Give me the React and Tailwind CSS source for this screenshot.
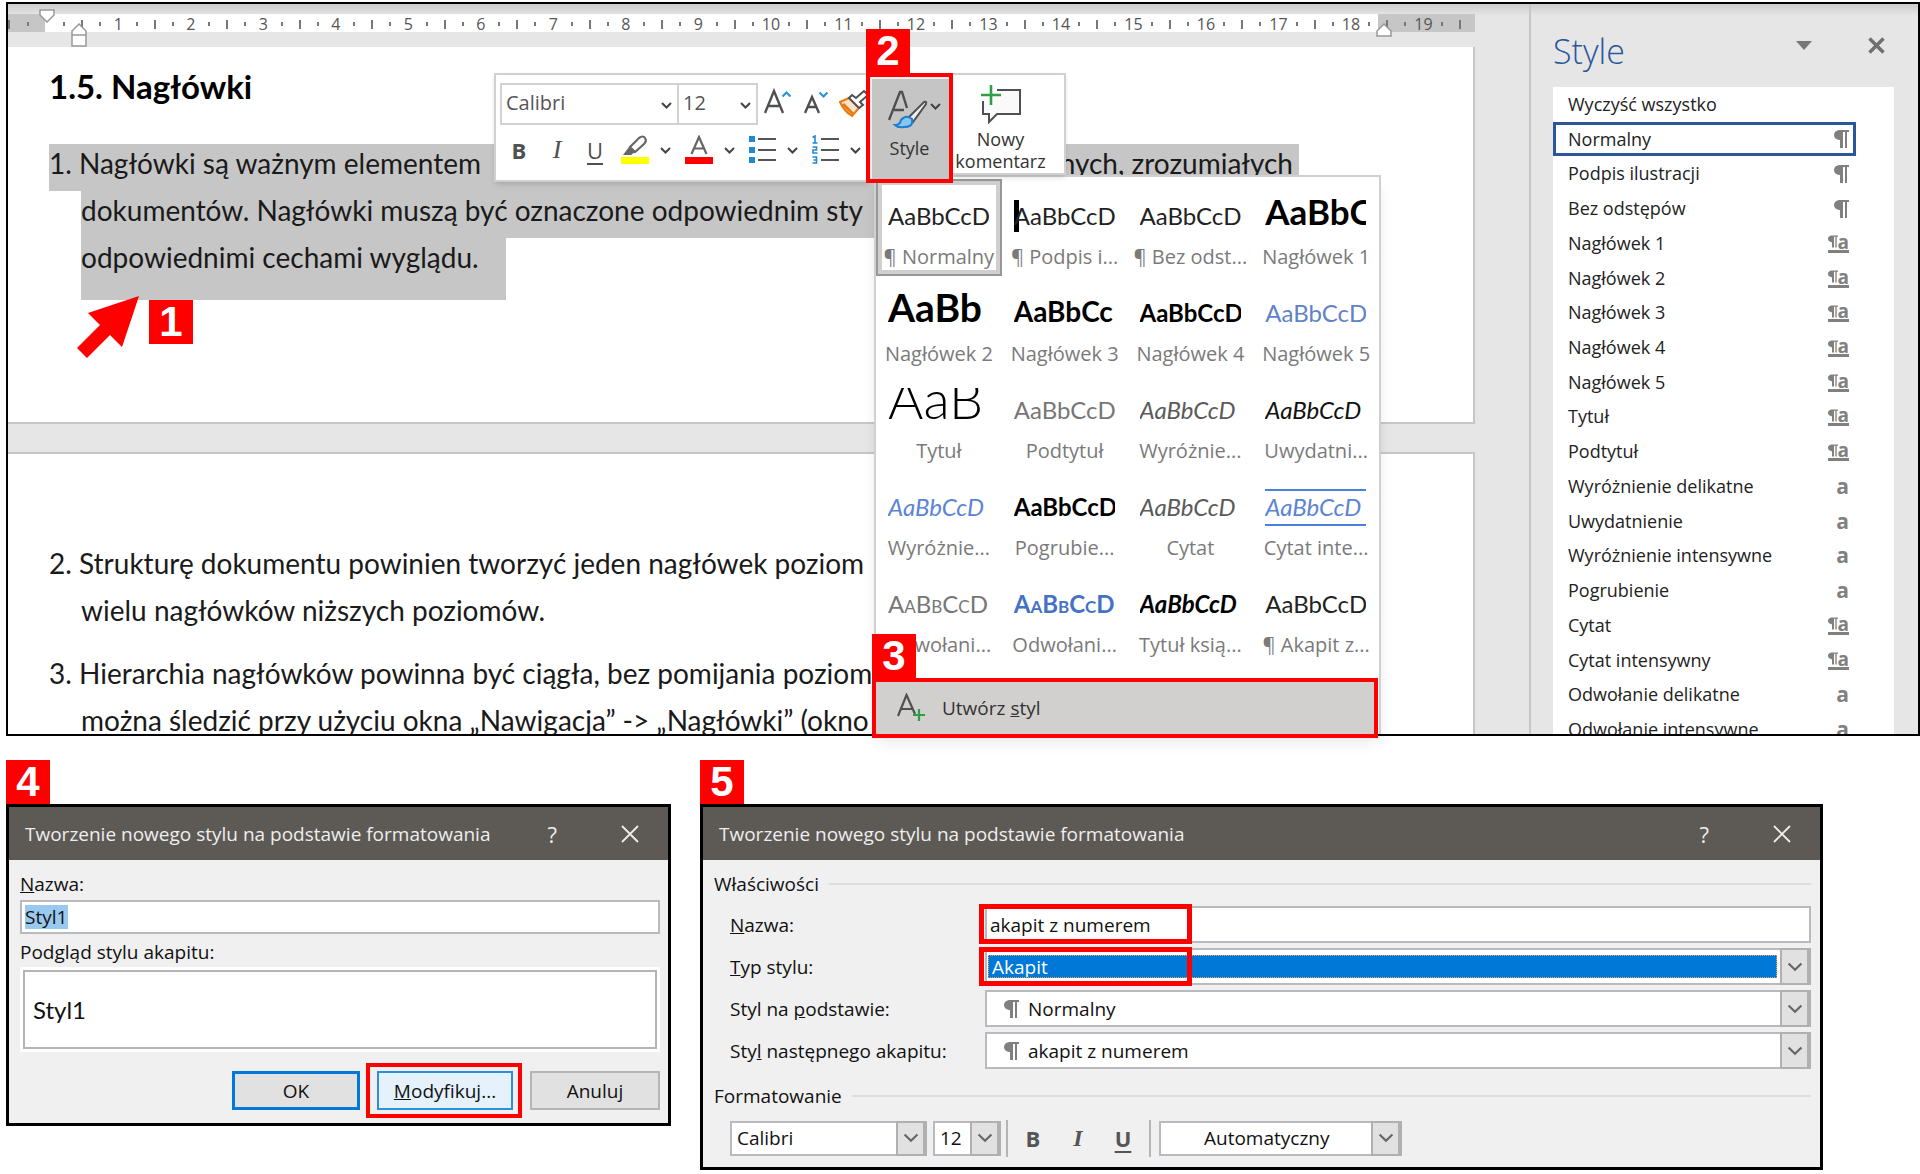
import React from "react";

const LIST = [
  ["Wyczyść wszystko", ""],
  ["Normalny", "p"],
  ["Podpis ilustracji", "p"],
  ["Bez odstępów", "p"],
  ["Nagłówek 1", "pa"],
  ["Nagłówek 2", "pa"],
  ["Nagłówek 3", "pa"],
  ["Nagłówek 4", "pa"],
  ["Nagłówek 5", "pa"],
  ["Tytuł", "pa"],
  ["Podtytuł", "pa"],
  ["Wyróżnienie delikatne", "a"],
  ["Uwydatnienie", "a"],
  ["Wyróżnienie intensywne", "a"],
  ["Pogrubienie", "a"],
  ["Cytat", "pa"],
  ["Cytat intensywny", "pa"],
  ["Odwołanie delikatne", "a"],
  ["Odwołanie intensywne", "a"],
];

const GALLERY = [
  ["AaBbCcD", "¶ Normalny", "text-[#222]"],
  ["AaBbCcD", "¶ Podpis i...", "text-[#222]"],
  ["AaBbCcD", "¶ Bez odst...", "text-[#222]"],
  ["AaBbCc", "Nagłówek 1", "text-[35px] font-bold"],
  ["AaBb", "Nagłówek 2", "text-[39px] font-bold"],
  ["AaBbCc", "Nagłówek 3", "text-[28px] font-bold"],
  ["AaBbCcD", "Nagłówek 4", "font-bold"],
  ["AaBbCcD", "Nagłówek 5", "text-[#5f82c8]"],
  ["AaB", "Tytuł", "text-[54px] font-light"],
  ["AaBbCcD", "Podtytuł", "text-[#767676]"],
  ["AaBbCcD", "Wyróżnie...", "italic text-[#5a5a5a]"],
  ["AaBbCcD", "Uwydatni...", "italic text-[#111]"],
  ["AaBbCcD", "Wyróżnie...", "italic text-[#5b84d6]"],
  ["AaBbCcD", "Pogrubie...", "font-bold"],
  ["AaBbCcD", "Cytat", "italic text-[#5a5a5a]"],
  ["AaBbCcD", "Cytat inte...", "italic text-[#5b84d6]"],
  ["AaBbCcD", "Odwołani...", "[font-variant:small-caps] text-[#767676]"],
  ["AaBbCcD", "Odwołani...", "[font-variant:small-caps] font-bold text-[#4472c4]"],
  ["AaBbCcD", "Tytuł ksią...", "italic font-bold"],
  ["AaBbCcD", "¶ Akapit z...", "text-[#222]"],
];

const TICKS = Array.from({ length: 78 }, (_, i) => i + 1);

function Chevron({ className, thin }) {
  return (
    <svg viewBox="0 0 11 7" className={className} aria-hidden="true">
      <path d="M1 1 L5.5 5.5 L10 1" fill="none" stroke="currentColor" strokeWidth={thin ? 1.5 : 2} />
    </svg>
  );
}

function Badge({ n, className = "" }) {
  return (
    <div className={`flex h-11 w-11 items-center justify-center bg-[#f00] font-['Liberation_Sans',sans-serif] text-[42px] leading-none font-bold text-white ${className}`}>
      {n}
    </div>
  );
}

function ParagraphIcon({ className = "h-[18px] w-[15px]" }) {
  return (
    <svg viewBox="0 0 15 18" className={`shrink-0 ${className}`} aria-hidden="true">
      <path d="M5 0 H15 V2 H13 V18 H11 V2 H9 V18 H6 V10 H5 Q0 9 0 5 Q0 1 5 0 Z" fill="#808080" />
    </svg>
  );
}

function RulerMark({ k }) {
  if (k % 4 === 0) return <span className="whitespace-nowrap">{k / 4}</span>;
  if (k % 4 === 2) return <span className="h-[9px] w-[2px] bg-[#777]" />;
  return <span className="h-[4px] w-[2px] bg-[#777]" />;
}

function Ruler() {
  return (
    <div className="relative flex h-[18px] bg-white text-[16px] leading-[20px] text-[#555]">
      <div className="flex w-[37px] items-center justify-between bg-[#c6c6c6] pt-[2px] pr-4">
        <span className="h-[9px] w-[2px] bg-[#777]" />
        <span className="h-[4px] w-[2px] bg-[#777]" />
      </div>
      <div className="w-[10px]" />
      {TICKS.map((k) => (
        <div key={k} className={`flex min-w-0 flex-1 items-center justify-center pt-[2px] ${k > 73 ? "bg-[#c6c6c6]" : ""}`}>
          <RulerMark k={k} />
        </div>
      ))}
      <div className="w-[6px] bg-[#c6c6c6]" />
      <svg viewBox="0 0 16 14" className="absolute -top-[5px] left-[31px] h-[14px] w-4" aria-hidden="true">
        <path d="M1 1 H15 V6 L8 13 L1 6 Z" fill="#fff" stroke="#999" strokeWidth="1.5" />
      </svg>
      <svg viewBox="0 0 16 24" className="absolute top-[9px] left-[63px] h-6 w-4" aria-hidden="true">
        <path d="M8 1 L15 8 V23 H1 V8 Z M1 12 H15" fill="#fff" stroke="#999" strokeWidth="1.5" />
      </svg>
      <svg viewBox="0 0 16 14" className="absolute top-[9px] right-[83px] h-[14px] w-4" aria-hidden="true">
        <path d="M8 1 L15 8 V13 H1 V8 Z" fill="#fff" stroke="#999" strokeWidth="1.5" />
      </svg>
    </div>
  );
}

function Line({ n, children, className = "" }) {
  return (
    <div className={`flex h-[47px] leading-[38px] whitespace-pre ${n ? "" : "ml-8"} ${className}`}>
      {n && <span className="w-[30px] shrink-0">{n}</span>}
      {children}
    </div>
  );
}

function Document() {
  return (
    <div className="min-w-0 flex-1 pt-[10px] pr-[54px]">
      <Ruler />
      <div className="mt-[15px] font-['Lato',sans-serif] text-[28px] text-[#1a1a1a]">
        <article className="h-[377px] overflow-hidden border-r-2 border-b-2 border-[#c6c6c6] bg-white pt-[15px] pl-[41px]">
          <h1 className="text-[33px] leading-[48px] font-bold text-black">1.5. Nagłówki</h1>
          <div className="mt-[34px]">
            <Line n="1." className="mr-[174px] bg-[#c6c6c6] pr-[6px]">
              <span className="flex-1">Nagłówki są ważnym elementem</span>
              <span>nych, zrozumiałych</span>
            </Line>
            <Line className="mr-[174px] bg-[#c6c6c6]">dokumentów. Nagłówki muszą być oznaczone odpowiednim sty</Line>
            <Line className="h-[62px] w-[425px] bg-[#c6c6c6]">odpowiednimi cechami wyglądu.</Line>
          </div>
        </article>
        <article className="mt-7 h-[320px] border-t-2 border-r-2 border-[#c6c6c6] bg-white pt-[90px] pl-[41px]">
          <Line n="2.">Strukturę dokumentu powinien tworzyć jeden nagłówek poziom</Line>
          <Line>wielu nagłówków niższych poziomów.</Line>
          <div className="h-4" />
          <Line n="3.">Hierarchia nagłówków powinna być ciągła, bez pomijania poziom</Line>
          <Line>można śledzić przy użyciu okna „Nawigacja” -&gt; „Nagłówki” (okno</Line>
        </article>
      </div>
    </div>
  );
}

function StylesPane() {
  return (
    <aside className="w-[389px] shrink-0 border-l-2 border-[#c6c6c6] pr-6 pl-[22px]">
      <header className="flex h-[83px] items-start pt-[23px]">
        <h2 className="flex-1 text-[34px] leading-[48px] font-light text-[#2b579a]">Style</h2>
        <button aria-label="Opcje okienka" className="mt-[14px] mr-[56px]">
          <svg viewBox="0 0 16 9" className="h-[9px] w-4"><path d="M0 0 H16 L8 9 Z" fill="#777" /></svg>
        </button>
        <button aria-label="Zamknij" className="mt-[10px] mr-[9px]">
          <svg viewBox="0 0 17 17" className="h-[17px] w-[17px]"><path d="M1.5 1.5 L15.5 15.5 M15.5 1.5 L1.5 15.5" stroke="#707070" strokeWidth="3.5" /></svg>
        </button>
      </header>
      <ul className="flex h-[660px] flex-col bg-white text-[18px] text-[#222]">
        {LIST.map(([name, kind]) => (
          <li key={name} className="flex-1">
            <button className={`flex h-full w-[303px] items-center justify-between pr-[7px] pl-[15px] ${name === "Normalny" ? "shadow-[inset_0_0_0_3px_#2b579a]" : ""}`}>
              <span>{name}</span>
              {kind === "p" && <ParagraphIcon />}
              {kind === "a" && <span className="text-[21px] leading-none font-bold text-[#808080]">a</span>}
              {kind === "pa" && (
                <span className="flex h-[19px] items-center border-b-[3px] border-[#808080] text-[#808080]">
                  <ParagraphIcon className="h-[13px] w-[10px]" />
                  <span className="text-[19px] leading-[18px] font-bold">a</span>
                </span>
              )}
            </button>
          </li>
        ))}
      </ul>
    </aside>
  );
}

function MiniCombo({ label, value, className }) {
  return (
    <div className={`relative h-[42px] shrink-0 border-2 border-[#d2d2d2] ${className}`}>
      <select aria-label={label} className="h-full w-full appearance-none bg-white pb-[2px] pl-1 text-[20px] text-[#555]">
        <option>{value}</option>
      </select>
      <Chevron className="pointer-events-none absolute top-[17px] right-[5px] h-[7px] w-[11px] text-[#444]" />
    </div>
  );
}

function DropIcon({ label, children, className = "" }) {
  return (
    <button aria-label={label} className={`flex h-[32px] shrink-0 items-center ${className}`}>
      {children}
      <Chevron className="ml-[11px] h-[7px] w-[11px] text-[#444]" />
    </button>
  );
}

function MiniToolbar() {
  return (
    <div role="toolbar" className="absolute top-[69px] left-[486px] z-20 flex items-start">
      <div className="h-[109px] w-[376px] overflow-hidden border-2 border-[#d0d0d0] bg-white pt-2 pl-1 shadow-md">
        <div className="flex items-start">
          <MiniCombo label="Czcionka" value="Calibri" className="w-[179px]" />
          <MiniCombo label="Rozmiar czcionki" value="12" className="-ml-[2px] w-[81px]" />
          <button aria-label="Zwiększ czcionkę" className="mt-[5px] ml-[6px] shrink-0">
            <svg viewBox="0 0 28 28" className="h-7 w-7" fill="none">
              <path d="M1 25 L10 3 L19 25 M4 18 H16" stroke="#505050" strokeWidth="2.4" />
              <path d="M18.500 8.500 L22.500 4.500 L26.500 8.500" stroke="#2e95d8" strokeWidth="2.2" />
            </svg>
          </button>
          <button aria-label="Zmniejsz czcionkę" className="mt-[5px] ml-[12px] shrink-0">
            <svg viewBox="0 0 28 28" className="h-7 w-7" fill="none">
              <path d="M1 25 L8 9 L15 25 M4 19 H12" stroke="#505050" strokeWidth="2.4" />
              <path d="M15.500 4.500 L19.500 8.500 L23.500 4.500" stroke="#2e95d8" strokeWidth="2.2" />
            </svg>
          </button>
          <button aria-label="Malarz formatów" className="mt-[7px] ml-[7px] shrink-0">
            <svg viewBox="0 0 32 28" className="h-7 w-8" fill="none">
              <path d="M1 12 L10 8 L20 18 L13 26 Q5 21 1 12 Z" fill="#fbe3cc" stroke="#e8780f" strokeWidth="2" />
              <path d="M4 14 L14 24" stroke="#e8780f" strokeWidth="3" />
              <path d="M10 8 L13 5 L17 8 L25 1 L29 5 L21 12 L24 15 L20 18 Z" fill="#fff" stroke="#505050" strokeWidth="2" />
            </svg>
          </button>
        </div>
        <div className="mt-[9px] flex items-center pl-[11px] text-[#505050]">
          <button className="w-[16px] shrink-0 text-[22px] leading-[30px] font-bold">B</button>
          <button className="ml-[22px] w-[16px] shrink-0 font-['Liberation_Serif',serif] text-[26px] leading-[30px] italic">I</button>
          <button className="ml-[21px] w-[18px] shrink-0 text-[22px] leading-[30px] underline underline-offset-4">U</button>
          <DropIcon label="Kolor wyróżnienia tekstu" className="ml-[17px]">
            <svg viewBox="0 0 28 30" className="h-[30px] w-7">
              <path d="M2 20 L8 12 L14 17 L10 20 Z" fill="#666" />
              <path d="M9 12 L18 3 Q22 0 24 3 Q26 6 23 9 L14 17 Z" fill="#fff" stroke="#666" strokeWidth="2.2" />
              <path d="M0 22 H28 V29 H0 Z" fill="#ff0" />
            </svg>
          </DropIcon>
          <DropIcon label="Kolor czcionki" className="ml-[14px]">
            <svg viewBox="0 0 28 30" className="h-[30px] w-7">
              <path d="M6.500 19 L14 2 L21.500 19 M9 13.500 H19" fill="none" stroke="#666" strokeWidth="2.2" />
              <path d="M0 22 H28 V29 H0 Z" fill="#f00" />
            </svg>
          </DropIcon>
          <DropIcon label="Punktory" className="ml-[14px]">
            <svg viewBox="0 0 27 30" className="h-[30px] w-[27px]">
              <path d="M0 1 H6 V7 H0 Z M0 12 H6 V18 H0 Z M0 22 H6 V28 H0 Z" fill="#1e8ad2" />
              <path d="M9 4 H27 M9 15 H27 M9 25 H27" stroke="#555" strokeWidth="2" />
            </svg>
          </DropIcon>
          <DropIcon label="Numerowanie" className="ml-[14px]">
            <svg viewBox="0 0 27 30" className="h-[30px] w-[27px]">
              <g fill="none" stroke="#1e8ad2" strokeWidth="1.600">
                <path d="M0.500 2.500 L3 1 V8 M0.500 8 H5.500" />
                <path d="M0.500 12 H4.500 V15 H1 V18 H5.500" />
                <path d="M0.500 22 H4.500 V28 H0.500 M1.500 25 H4.500" />
              </g>
              <path d="M9 4 H27 M9 15 H27 M9 25 H27" stroke="#555" strokeWidth="2" />
            </svg>
          </DropIcon>
        </div>
      </div>
      <div className="relative -ml-1">
        <Badge n="2" className="absolute -top-11 left-0" />
        <button className="flex h-[110px] w-[87px] flex-col items-center border-4 border-[#f00] bg-[#c5c5c5] pt-[13px] shadow-[inset_2px_2px_0_#eee]">
          <span className="flex items-start pl-[10px]">
            <svg viewBox="0 0 42 40" className="h-10 w-[42px]" fill="none">
              <path d="M1 30 L12 2 H14 L19 18 M6 20 H16" stroke="#505050" strokeWidth="2.4" />
              <path d="M20 28 L36 12 Q39 11 38 14 L25 32 Z" fill="#eee" stroke="#505050" strokeWidth="2" />
              <path d="M7 35 Q12 35 13 30 Q18 24 24 29 Q26 37 16 37 Q10 38 7 35 Z" fill="#8cc4f0" stroke="#1c7fd0" strokeWidth="2" />
            </svg>
            <Chevron className="mt-[13px] h-[7px] w-[11px] text-[#444]" />
          </span>
          <span className="mt-[6px] text-[18px] leading-6 text-[#333]">Style</span>
        </button>
      </div>
      <button className="flex h-[102px] w-[113px] flex-col items-center border-2 border-l-0 border-[#d0d0d0] bg-white pt-[8px] pr-4 text-[18px] leading-[22px] text-[#333] shadow-md">
        <svg viewBox="0 0 42 42" className="h-[42px] w-[42px] shrink-0" fill="none">
          <path d="M17 7 H40 V31 H17 L9 39 V31 H3 V18" fill="#fafafa" stroke="#505050" strokeWidth="2" />
          <path d="M11 2 V22 M1 12 H21" stroke="#2f9e48" strokeWidth="2.600" />
        </svg>
        <span className="mt-[3px]">Nowy</span>
        <span>komentarz</span>
      </button>
    </div>
  );
}

function StyleMenu() {
  return (
    <div className="absolute top-[171px] left-[864px] z-10 w-[509px]">
      <div className="ml-[2px] h-[559px] border-2 border-b-0 border-[#d0d0d0] bg-white pt-[2px] shadow-lg">
        <div className="grid grid-cols-4">
          {GALLERY.map(([sample, name, cls], i) => (
            <button
              key={i}
              className={`h-[97px] overflow-hidden pt-[9px] pl-3 text-left ${i === 0 ? "shadow-[inset_0_0_0_2px_#979797,inset_0_0_0_6px_#d0cfcd]" : ""}`}
            >
              <span className={`block h-11 w-[101px] overflow-hidden font-['Lato',sans-serif] text-[24px] leading-[43px] whitespace-nowrap text-black ${i === 1 ? "bg-[linear-gradient(#000,#000)] bg-[length:5px_32px] bg-[position:0_6px] bg-no-repeat" : ""} ${i === 15 ? "bg-[linear-gradient(#4f7fdc,#4f7fdc),linear-gradient(#4f7fdc,#4f7fdc)] bg-[length:100%_2px] bg-[position:0_4px,0_39px] bg-no-repeat" : ""}`}>
                <span className={`leading-[0] ${cls}`}>{sample}</span>
              </span>
              <span className="-ml-3 mt-[5px] block text-center text-[20px] leading-7 whitespace-nowrap text-[#7a7a7a]">{name}</span>
            </button>
          ))}
        </div>
      </div>
      <div className="relative -mt-[56px] mr-[3px]">
        <Badge n="3" className="absolute -top-11 left-0" />
        <button className="flex h-[60px] w-full items-center border-4 border-[#f00] bg-[#d2d0ce] pl-[21px] text-[19px] text-[#333]">
          <svg viewBox="0 0 30 30" className="h-[30px] w-[30px]" fill="none">
            <path d="M1 23 L9.500 2 L18 21 M4 16 H15" stroke="#505050" strokeWidth="2.2" />
            <path d="M22 16 V28 M16 22 H28" stroke="#2f9e48" strokeWidth="2.200" />
          </svg>
          <span className="ml-[15px]">Utwórz <u>s</u>tyl</span>
        </button>
      </div>
    </div>
  );
}

function TitleBar({ children }) {
  return (
    <header className="flex h-[53px] items-center bg-[#5d5955] pr-[29px] pl-4 text-[19px] text-[#eee]">
      <h2 className="flex-1 whitespace-nowrap">{children}</h2>
      <button aria-label="Pomoc" className="text-[22px]">?</button>
      <button aria-label="Zamknij" className="ml-[64px]">
        <svg viewBox="0 0 18 18" className="h-[18px] w-[18px]"><path d="M1 1 L17 17 M17 1 L1 17" stroke="#eee" strokeWidth="1.8" /></svg>
      </button>
    </header>
  );
}

function NewStyleDialog() {
  return (
    <section className="border-[3px] border-black bg-[#f0f0f0] text-[19px] leading-6 text-[#111]">
      <TitleBar>Tworzenie nowego stylu na podstawie formatowania</TitleBar>
      <div className="flex flex-col pt-3 pr-2 pb-[5px] pl-[11px]">
        <label htmlFor="name4"><u>N</u>azwa:</label>
        <div className="mt-1 flex h-[34px] items-center border-2 border-[#b9bac0] bg-white px-[3px]">
          <input id="name4" defaultValue="Styl1" className="h-[24px] w-[43px] bg-[#99c9ef] outline-none" />
        </div>
        <p className="mt-[6px]">Podgląd stylu akapitu:</p>
        <div className="mt-[3px] h-[85px] bg-white p-[3px]">
          <div className="flex h-full items-center border-2 border-[#b4b4b4] pl-2 font-['Lato',sans-serif] text-[24px]">Styl1</div>
        </div>
        <div className="mt-[11px] flex items-center justify-end gap-[6px]">
          <button className="h-[39px] w-32 border-[3px] border-[#0078d7] bg-[#e1e1e1]">OK</button>
          <div className="mr-[2px] border-4 border-[#f00] py-1 pr-[5px] pl-[7px]">
            <button className="h-[39px] w-[136px] border-2 border-[#2b8fdc] bg-[#e5f1fb]"><u>M</u>odyfikuj...</button>
          </div>
          <button className="h-[39px] w-[130px] border-2 border-[#b5b5b5] bg-[#e1e1e1]">Anuluj</button>
        </div>
      </div>
    </section>
  );
}

function Combo({ id, label, value, mark, selected, className = "", pad = "pl-[9px]", children }) {
  return (
    <div className={`relative flex items-center border-2 border-[#b9bac0] bg-white ${className}`}>
      {mark && <ParagraphIcon className="ml-[17px] h-[18px] w-[15px]" />}
      <select
        id={id}
        aria-label={label}
        className={`min-w-0 flex-1 appearance-none text-[19px] leading-[22px] ${selected ? "mr-[32px] ml-px h-[23px] border border-dotted border-[#e8a060] bg-[#0078d7] pl-[3px] text-white" : pad}`}
      >
        <option>{value}</option>
      </select>
      <span className="pointer-events-none absolute -inset-y-[2px] -right-[2px] flex w-[31px] items-center justify-center border-2 border-r-4 border-[#b0b0b0] bg-[#e1e1e1]">
        <Chevron thin className="h-[10px] w-4 text-[#666]" />
      </span>
      {children}
    </div>
  );
}

function Legend({ children }) {
  return (
    <div className="flex items-center gap-[10px]">
      <h3>{children}</h3>
      <span className="h-[2px] flex-1 bg-[#dedede]" />
    </div>
  );
}

function StylePropsDialog() {
  return (
    <section className="border-[3px] border-black bg-[#f0f0f0] text-[19px] leading-6 text-[#111]">
      <TitleBar>Tworzenie nowego stylu na podstawie formatowania</TitleBar>
      <div className="pt-3 pr-[9px] pb-[11px] pl-[11px]">
        <Legend>Właściwości</Legend>
        <div className="mt-[10px] grid auto-rows-[37px] grid-cols-[255px_1fr] items-center gap-y-[5px] pl-4">
          <label htmlFor="name5"><u>N</u>azwa:</label>
          <div className="relative h-full">
            <input id="name5" defaultValue="akapit z numerem" className="h-full w-full border-2 border-[#b9bac0] bg-white pl-[3px]" />
            <span className="pointer-events-none absolute -top-[2px] -left-[6px] h-[40px] w-[213px] border-[5px] border-[#f00]" />
          </div>
          <label htmlFor="type5"><u>T</u>yp stylu:</label>
          <Combo id="type5" value="Akapit" selected className="h-full">
            <span className="pointer-events-none absolute -top-[3px] -left-[8px] h-[39px] w-[213px] border-[5px] border-[#f00]" />
          </Combo>
          <label htmlFor="base5">Styl na <u>p</u>odstawie:</label>
          <Combo id="base5" value="Normalny" mark className="h-full" />
          <label htmlFor="next5">Sty<u>l</u> następnego akapitu:</label>
          <Combo id="next5" value="akapit z numerem" mark className="h-full" />
        </div>
        <div className="mt-[15px]"><Legend>Formatowanie</Legend></div>
        <div className="mt-3 flex h-9 items-center pl-4">
          <Combo label="Czcionka" value="Calibri" className="h-[35px] w-[197px]" pad="pl-[5px]" />
          <Combo label="Rozmiar" value="12" className="ml-[6px] h-[35px] w-[68px]" pad="pl-[5px]" />
          <span className="ml-[5px] h-[37px] w-[2px] bg-[#b5b5b5]" />
          <button className="ml-[17px] w-[16px] text-[22px] font-bold text-[#555]">B</button>
          <button className="ml-[29px] w-[16px] font-['Liberation_Serif',serif] text-[24px] font-bold italic text-[#555]">I</button>
          <button className="ml-[28px] w-[18px] text-[22px] font-bold text-[#555] underline underline-offset-4">U</button>
          <span className="ml-[17px] h-[37px] w-[2px] bg-[#b5b5b5]" />
          <Combo label="Kolor czcionki" value="Automatyczny" className="ml-[8px] h-[35px] w-[243px]" pad="pl-[43px]" />
        </div>
      </div>
    </section>
  );
}

export default function App() {
  return (
    <main className="min-h-screen bg-white pt-[2px] pb-1 pl-[6px] font-['Open_Sans',sans-serif]">
      <section className="relative h-[734px] border-2 border-black bg-[#e6e6e6]">
        <div className="flex h-full overflow-hidden bg-[linear-gradient(#cdcdcd,#e6e6e6)] bg-[length:100%_12px] bg-no-repeat">
          <Document />
          <StylesPane />
        </div>
        <svg viewBox="0 0 62 62" className="absolute top-[292px] left-[69px] h-[62px] w-[62px]" aria-hidden="true">
          <path d="M62 0 L11 17 L23 29 L0 52 L10 62 L33 39 L45 51 Z" fill="#f00" />
        </svg>
        <Badge n="1" className="absolute top-[296px] left-[141px]" />
        <MiniToolbar />
        <StyleMenu />
      </section>
      <div className="mt-6 flex items-start gap-[29px] pr-[97px]">
        <div className="w-[665px] shrink-0">
          <Badge n="4" />
          <NewStyleDialog />
        </div>
        <div className="min-w-0 flex-1">
          <Badge n="5" />
          <StylePropsDialog />
        </div>
      </div>
    </main>
  );
}
